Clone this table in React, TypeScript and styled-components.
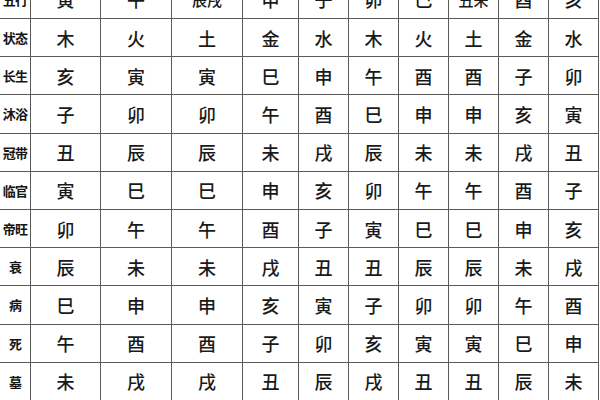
import React from "react";
import styled, { createGlobalStyle } from "styled-components";

const Global = createGlobalStyle`
  html, body { margin: 0; padding: 0; background: #ffffff; overflow: hidden; }
  body { width: 600px; height: 400px; font-family: "Noto Sans CJK SC", "Noto Sans", sans-serif; }
`;

const Frame = styled.div`
  width: 600px;
  height: 400px;
  overflow: hidden;
  background: #ffffff;
`;

const Grid = styled.div`
  display: grid;
  grid-template-columns: 30px 69px 70px 70px 55px repeat(6, 49px);
  grid-auto-rows: 37.2px;
  gap: 1px;
  background: #5a5a5a;
  width: 598px;
  padding-right: 1px;
  margin-top: -19.2px;
`;

const Cell = styled.div<{ $small?: boolean }>`
  background: #ffffff;
  display: flex;
  align-items: center;
  justify-content: center;
  color: #1a1a1a;
  font-family: "Noto Sans CJK SC", sans-serif;
  font-weight: 500;
  font-size: ${(p) => (p.$small ? "15px" : "18px")};
  line-height: 1;
  white-space: nowrap;
`;

const Label = styled.div`
  background: #ffffff;
  display: flex;
  align-items: center;
  justify-content: center;
  color: #151515;
  font-family: "Noto Sans CJK SC", sans-serif;
  font-weight: 700;
  font-size: 13px;
  letter-spacing: -0.8px;
  line-height: 1;
  white-space: nowrap;
`;

const rows: [string, string[]][] = [
  ["五行", ["寅", "午", "辰戌", "申", "子", "卯", "巳", "丑未", "酉", "亥"]],
  ["状态", ["木", "火", "土", "金", "水", "木", "火", "土", "金", "水"]],
  ["长生", ["亥", "寅", "寅", "巳", "申", "午", "酉", "酉", "子", "卯"]],
  ["沐浴", ["子", "卯", "卯", "午", "酉", "巳", "申", "申", "亥", "寅"]],
  ["冠带", ["丑", "辰", "辰", "未", "戌", "辰", "未", "未", "戌", "丑"]],
  ["临官", ["寅", "巳", "巳", "申", "亥", "卯", "午", "午", "酉", "子"]],
  ["帝旺", ["卯", "午", "午", "酉", "子", "寅", "巳", "巳", "申", "亥"]],
  ["衰", ["辰", "未", "未", "戌", "丑", "丑", "辰", "辰", "未", "戌"]],
  ["病", ["巳", "申", "申", "亥", "寅", "子", "卯", "卯", "午", "酉"]],
  ["死", ["午", "酉", "酉", "子", "卯", "亥", "寅", "寅", "巳", "申"]],
  ["墓", ["未", "戌", "戌", "丑", "辰", "戌", "丑", "丑", "辰", "未"]],
];

export default function App() {
  return (
    <Frame>
      <Global />
      <Grid>
        {rows.map(([label, cells]) => (
          <React.Fragment key={label}>
            <Label>{label}</Label>
            {cells.map((c, i) => (
              <Cell key={i} $small={c.length > 1}>
                {c}
              </Cell>
            ))}
          </React.Fragment>
        ))}
      </Grid>
    </Frame>
  );
}
